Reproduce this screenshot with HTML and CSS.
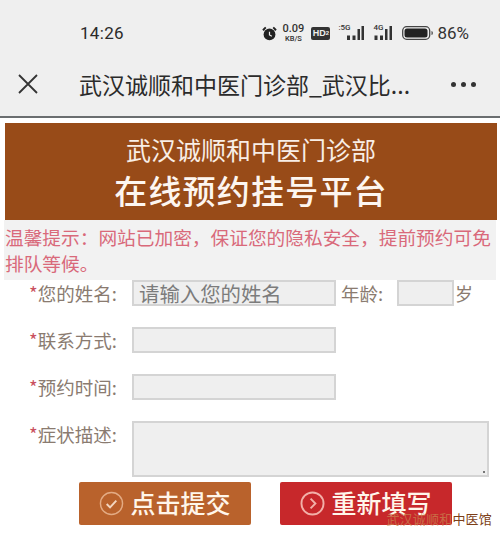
FILE: index.html
```html
<!DOCTYPE html>
<html lang="zh-CN">
<head>
  <meta charset="UTF-8">
  <title>在线预约挂号平台</title>
  <meta name="viewport" content="width=device-width, initial-scale=1.0">
  <link rel="stylesheet" href="styles.css">
</head>
<body>
  <div class="phone-top">
    <div class="status-bar">
      <span class="clock">14:26</span>
      <div class="status-icons">
        <svg class="alarm" width="15" height="15" viewBox="0 0 16 16">
          <circle cx="8" cy="9" r="6.300" fill="#222"/>
          <path d="M1 4.500 L4 1.500 M15 4.500 L12 1.500" stroke="#222" stroke-width="2"/>
          <path d="M8 6 V9.500 L10.500 11" stroke="#eee" stroke-width="1.300" fill="none"/>
        </svg>
        <div class="speed"><b>0.09</b><i>KB/S</i></div>
        <div class="hd"><span class="hd-text">HD</span><span class="hd-num">2</span></div>
        <div class="signal signal-5g">
          <span class="net">:5G</span>
          <svg width="21" height="14" viewBox="0 0 21 14"><path d="M4 9.500h3v4.500H4zM9.500 9.500h3v4.500h-3zM14.500 3h2.500v11h-2.500zM18.500 0h2.500v14h-2.500z" fill="#333"/></svg>
        </div>
        <div class="signal">
          <span class="net">4G</span>
          <svg width="21" height="14" viewBox="0 0 21 14"><path d="M1.500 9.500h3v4.500h-3zM7 9.500h3v4.500H7zM12 3h2.500v11H12zM16.500 0h2.500v14h-2.500z" fill="#333"/></svg>
        </div>
        <svg class="battery" width="31" height="14" viewBox="0 0 31 14">
          <rect x="0.700" y="0.700" width="27" height="12.600" rx="4" fill="none" stroke="#444" stroke-width="1.300"/>
          <rect x="2.500" y="2.500" width="23" height="9" rx="2.500" fill="#222"/>
          <path d="M29.500 5v4c1 0 1.300-1 1.300-2s-.3-2-1.300-2z" fill="#444"/>
        </svg>
        <span class="percent">86%</span>
      </div>
    </div>
    <div class="nav-bar">
      <svg class="close-icon" width="20" height="20" viewBox="0 0 20 20">
        <path d="M1 1 L19 19 M19 1 L1 19" stroke="#333" stroke-width="1.800"/>
      </svg>
      <span class="nav-title">武汉诚顺和中医门诊部_武汉比...</span>
      <div class="dots"><span></span><span></span><span></span></div>
    </div>
  </div>

  <div class="banner">
    <div class="banner-sub">武汉诚顺和中医门诊部</div>
    <div class="banner-main">在线预约挂号平台</div>
  </div>

  <p class="notice">温馨提示：网站已加密，保证您的隐私安全，提前预约可免排队等候。</p>

  <form class="form">
    <div class="row row-name">
      <label class="label"><em>*</em>您的姓名:</label>
      <input class="field" type="text" placeholder="请输入您的姓名">
      <label class="age-label">年龄:</label>
      <input class="field field-age" type="text">
      <span class="unit">岁</span>
    </div>
    <div class="row">
      <label class="label"><em>*</em>联系方式:</label>
      <input class="field" type="text">
    </div>
    <div class="row">
      <label class="label"><em>*</em>预约时间:</label>
      <input class="field" type="text">
    </div>
    <div class="row row-desc">
      <label class="label"><em>*</em>症状描述:</label>
      <textarea class="field field-desc"></textarea>
    </div>
    <div class="buttons">
      <button class="btn btn-submit" type="button">
        <svg width="25" height="25" viewBox="0 0 26 26" fill="none" stroke="#e3ab84" stroke-width="1.500">
          <circle cx="13" cy="13" r="11.500"/>
          <path d="M8 13.500 L11.500 17 L18 10" stroke="#f3d6c0" stroke-width="2"/>
        </svg>
        <span class="btn-text">点击提交</span>
      </button>
      <button class="btn btn-reset" type="button">
        <svg width="25" height="25" viewBox="0 0 26 26" fill="none" stroke="#f2b0a8" stroke-width="2">
          <circle cx="13" cy="13" r="11.500"/>
          <path d="M11 8 L16 13 L11 18" stroke-width="2"/>
        </svg>
        <span class="btn-text">重新填写</span>
      </button>
    </div>
  </form>

  <div class="watermark"><span class="wm-faded">武汉诚顺和</span>中医馆</div>
</body>
</html>
```

FILE: styles.css
```css
* { box-sizing: border-box; }
body {
  margin: 0;
  background: #fff;
  font-family: "Noto Sans CJK SC", "Noto Sans", sans-serif;
  height: 537px;
  overflow: hidden;
  position: relative;
}

.phone-top {
  height: 118px;
  background: #efefef;
  border-bottom: 2px solid #6a6e70;
}
.status-bar {
  height: 60px;
  padding: 6px 31px 0 80px;
  display: flex;
  align-items: center;
  justify-content: space-between;
}
.clock { font-family: Roboto, sans-serif; font-size: 17px; color: #2a2a2a; letter-spacing: 0.3px; }
.status-icons { display: flex; align-items: center; }
.speed { margin-left: 4px; width: 24px; text-align: center; font-family: Roboto, sans-serif; color: #333; }
.speed b { display: block; font-size: 11px; line-height: 11px; font-weight: 500; }
.speed i { display: block; font-size: 7.500px; line-height: 8px; margin-top: 1px; font-style: normal; font-weight: 500; }
.hd {
  margin-left: 6px;
  width: 19px;
  height: 13px;
  background: #333;
  color: #eee;
  border-radius: 2px;
  display: flex;
  align-items: center;
  justify-content: center;
  overflow: hidden;
}
.hd-text { font: bold 9px/13px "Liberation Sans", sans-serif; }
.hd-num { font: bold 6px/13px "Liberation Sans", sans-serif; }
.signal { display: flex; align-items: flex-end; margin-left: 9px; position: relative; width: 21px; }
.signal-5g { margin-left: 8px; width: 26px; justify-content: flex-end; }
.net { position: absolute; left: 0; top: -3px; font: 500 8px/9px Roboto, sans-serif; color: #333; }
.signal svg { display: block; }
.battery { margin-left: 8px; }
.percent { font-family: Roboto, sans-serif; font-size: 17px; color: #333; margin-left: 4px; }

.nav-bar {
  height: 56px;
  padding: 0 24px 8px 18px;
  display: flex;
  align-items: center;
}
.close-icon { flex: none; }
.nav-title { margin-left: 41px; font-size: 23px; line-height: 28px; color: #2b2b2b; white-space: nowrap; flex: 1; }
.dots { display: flex; gap: 5px; }
.dots span { width: 5px; height: 5px; border-radius: 50%; background: #333; }

.banner {
  margin: 5px 3px 0 5px;
  height: 97px;
  background: #984b18;
  color: #fff;
  text-align: center;
  padding-top: 9px;
}
.banner-sub { font-size: 25px; line-height: 35px; color: #f8eee6; }
.banner-main { font-size: 33px; line-height: 46px; font-weight: 500; letter-spacing: 1.200px; color: #fdf6f0; }

.notice {
  margin: 0 4px;
  height: 60px;
  padding: 4px 0 0 1px;
  background: #f2f2f2;
  color: #d9697a;
  font-size: 18.700px;
  line-height: 26px;
}

.form { padding-left: 29px; }
.row { display: flex; align-items: center; height: 26px; margin-bottom: 21px; }
.label { width: 103px; flex: none; font-size: 18.500px; color: #8a7b70; white-space: nowrap; }
.label em { font-style: normal; color: #c9505f; }
.field {
  width: 204px;
  height: 26px;
  background: #efefef;
  border: 2px solid #d4d4d4;
  padding: 0 5px;
  font-family: inherit;
  font-size: 20.400px;
  margin: 0;
  border-radius: 0;
  outline: none;
}
.field::placeholder { color: #7c7c7c; opacity: 1; }
.age-label { margin-left: 5px; width: 56px; font-size: 18.500px; color: #8a7b70; white-space: nowrap; }
.field-age { width: 57px; }
.unit { font-size: 18px; color: #8a7b70; margin-left: 1px; }
.row-desc { height: 56px; align-items: flex-start; margin-bottom: 5px; }
.row-desc .label { line-height: 26px; }
.field-desc {
  width: 357px;
  height: 56px;
  resize: none;
  background-image: radial-gradient(circle, #777 1px, transparent 1.200px);
  background-size: 4px 4px;
  background-position: right 1px bottom 1px;
  background-repeat: no-repeat;
}

.buttons { display: flex; gap: 29px; margin-left: 50px; }
.btn {
  width: 172px;
  height: 43px;
  border: 0;
  border-radius: 2px;
  color: #fff6ea;
  font-family: inherit;
  font-size: 25px;
  font-weight: 500;
  display: flex;
  align-items: center;
  justify-content: center;
  gap: 6px;
  padding: 0;
}
.btn-text { margin-top: -3px; }
.btn-submit { background: #b9622c; }
.btn-reset { background: #c7282b; }

.watermark {
  position: absolute;
  right: 8px;
  bottom: 10px;
  font-size: 13px;
  line-height: 17px;
  color: #7d3f18;
  letter-spacing: 0.200px;
}
.wm-faded { color: #c9824e; opacity: 0.75; }
```
